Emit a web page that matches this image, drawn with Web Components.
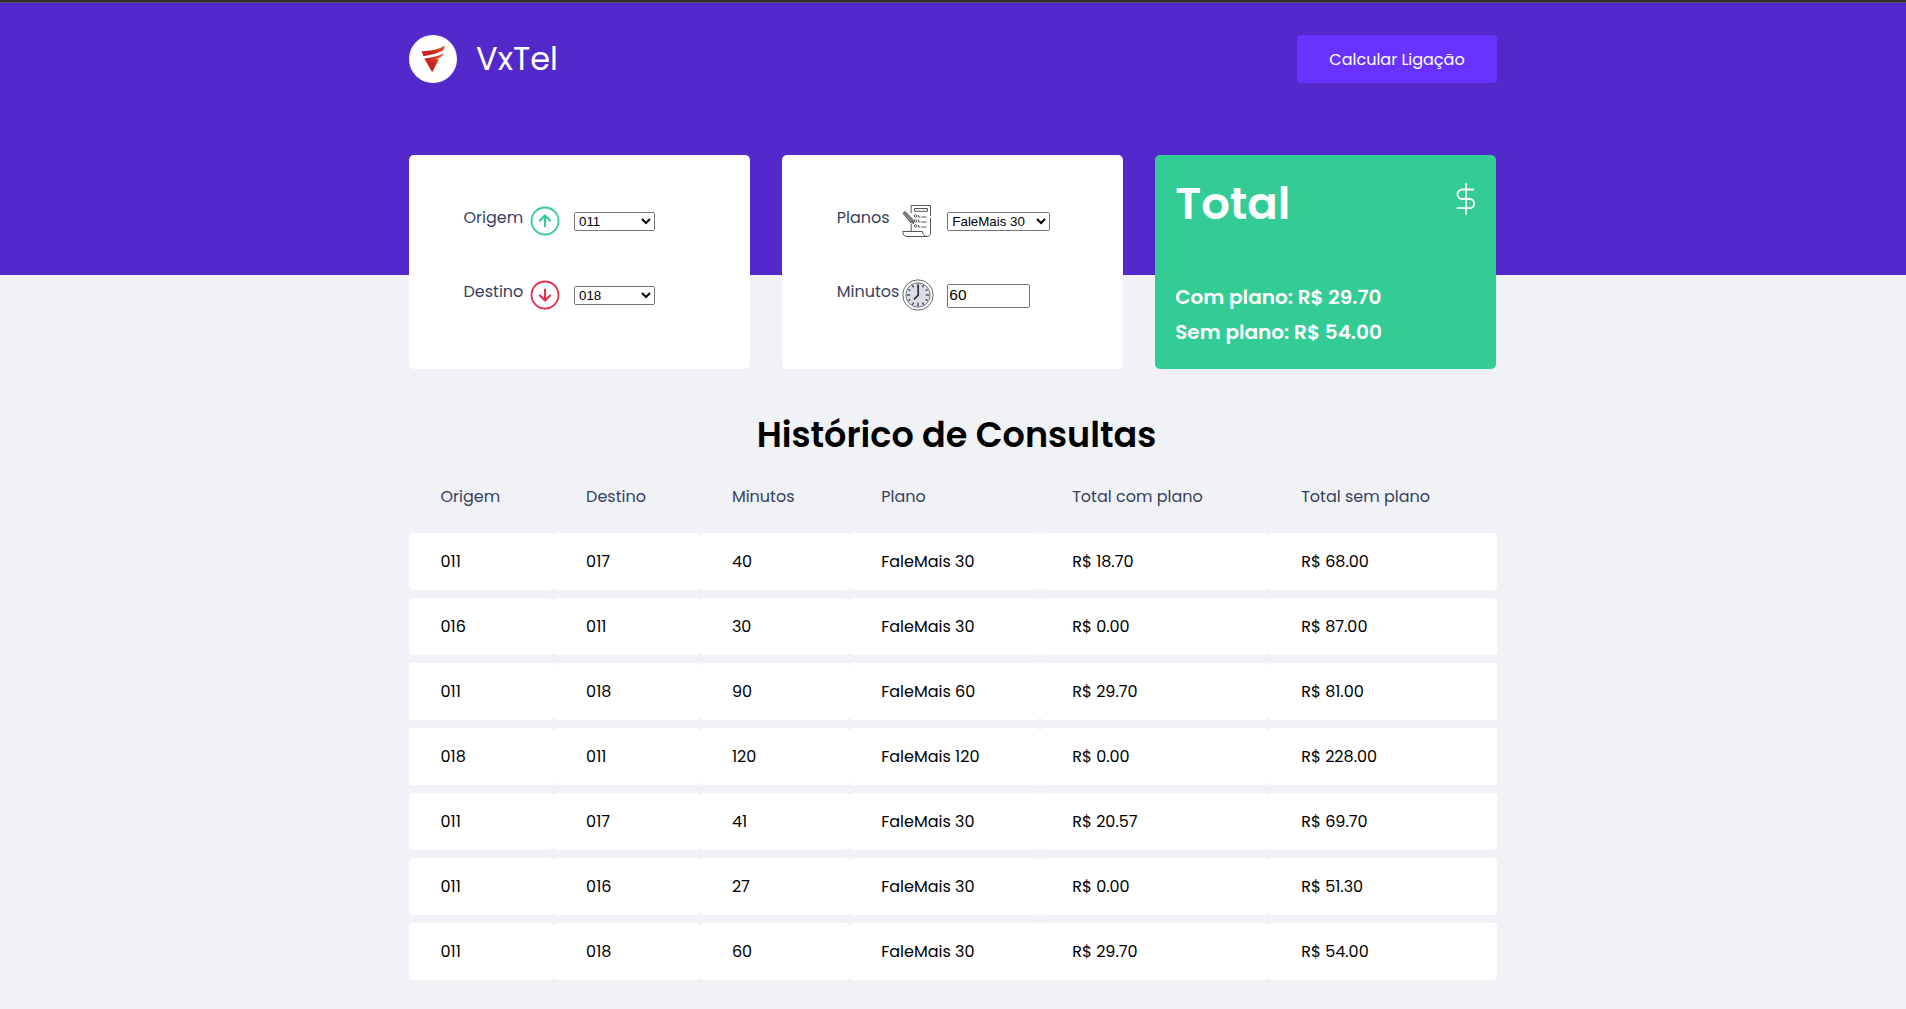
<!DOCTYPE html>
<html lang="pt-BR">
<head>
<meta charset="utf-8">
<title>VxTel</title>
<style>
html,body{margin:0;padding:0;background:#f0f2f5}
body{font-family:Poppins,Inter,"Open Sans",sans-serif;font-size:16px;color:#000;height:1009px;overflow:hidden}
</style>
</head>
<body>
<vx-app></vx-app>
<script>
const define=(name,html)=>customElements.define(name,class extends HTMLElement{
  connectedCallback(){
    if(this.shadowRoot)return;
    const t=document.createElement('template');
    t.innerHTML=typeof html==='function'?html(this):html;
    this.attachShadow({mode:'open'}).append(t.content.cloneNode(true));
  }
});

const icons={
 logo:`<svg width="48" height="48" viewBox="0 0 48 48"><defs><linearGradient id="g" x1="0" y1="1" x2="1" y2="0"><stop offset=".35" stop-color="#c8201f"/><stop offset="1" stop-color="#ea5a2c"/></linearGradient></defs><circle cx="24" cy="24" r="24" fill="#fff"/><path fill="url(#g)" d="M12.600 16.200C21 16.400 29.500 14.600 35.800 10.600C35.600 13 34.600 14.900 33 16C27.500 18.800 20.500 19.900 14.500 21.300Z"/><path fill="url(#g)" d="M15.300 23.400C22 22.600 28.500 21.300 34.600 18.400C33.800 20.600 32 22 29.800 23L26.500 24.200L30 24.300L23.200 37.300Z"/></svg>`,
 up:`<svg width="32" height="32" viewBox="0 0 32 32" fill="none" stroke="#33cc95" stroke-width="1.8" stroke-linecap="round" stroke-linejoin="round"><circle cx="16" cy="16" r="13.500"/><path stroke-width="2.100" d="M16 21.300V10.500M10.900 15.500L16 10.400L21.100 15.500"/></svg>`,
 down:`<svg width="32" height="32" viewBox="0 0 32 32" fill="none" stroke="#e52e4d" stroke-width="1.8" stroke-linecap="round" stroke-linejoin="round"><circle cx="16" cy="16" r="13.500"/><path stroke-width="2.100" d="M16 10.500V21.300M10.900 16.500L16 21.600L21.100 16.500"/></svg>`,
 plan:`<svg width="32" height="32" viewBox="0 0 32 32" fill="none" stroke="#55585c" stroke-width="1"><path d="M9.200 8V.500H28.500V11M28.500 13V28C28.500 33 20.500 32.500 20.500 26.500H.800C.800 30 2.500 31.500 5 31.500H25M9.200 19V26.500"/><path d="M12.500 3.500H25.500V6.300H12.500Z"/><circle cx="13.500" cy="11" r="1.300"/><circle cx="13.500" cy="16" r="1.300"/><circle cx="13.500" cy="21" r="1.300"/><path d="M16.500 10V12H18.500M19.500 12H24.500M16.500 15V17H18.500M19.500 17H24.500M16.500 20V22H18.500M19.500 22H24.500"/><path d="M1 8.200L3.200 6.500L10.800 14.500L11.700 18.500L8 17Z" fill="#9a9c9f"/><path d="M2.200 7.300L11 17"/></svg>`,
 clock:`<svg width="32" height="32" viewBox="0 0 32 32"><circle cx="16" cy="16" r="15.200" fill="#fff" stroke="#55585c" stroke-width=".9"/><circle cx="16" cy="16" r="12.200" fill="#d8dfe9" stroke="#55585c" stroke-width=".8"/><g stroke="#2d2f33" stroke-width="1.200">${[...Array(12)].map((_,i)=>`<path d="M16 4.800V${i%3?7.2:8.2}" transform="rotate(${i*30} 16 16)"/>`).join('')}</g><path d="M16.200 6.500V16.200L12 20.400" fill="none" stroke="#303236" stroke-width="1.700"/></svg>`,
 dollar:`<svg width="20" height="32" viewBox="0 0 20 32" fill="none" stroke="#fff" stroke-width="1.800" stroke-linecap="round" stroke-linejoin="round"><path d="M10 1V31M17.500 6.500H6.200A4.700 4.700 0 0 0 6.200 16H13.600A4.600 4.600 0 0 1 13.600 25.200H1.500"/></svg>`
};
define('vx-icon',el=>`<style>:host{display:block;line-height:0}svg{display:block}</style>${icons[el.getAttribute('name')]}`);

define('vx-button',`<style>:host{display:block}button{font:inherit;font-size:16px;line-height:24px;width:200px;height:48px;padding:2px 0 0 1px;border:0;border-radius:4px;background:#6933ff;color:#fff}</style><button><slot></slot></button>`);

define('vx-header',`<style>
:host{display:block;box-sizing:border-box;height:275px;background:#5429cc;border-top:2px solid #2e2e2e}
.line{height:1px;background:#575263}
.in{width:1088px;margin:0 auto;padding:32px 1px 0 0;display:flex;justify-content:space-between;align-items:center}
.brand{display:flex;align-items:center;gap:19.500px}
h1{margin:0;font-size:32px;line-height:48px;font-weight:400;color:#fff}
</style><div class="line"></div><div class="in"><div class="brand"><vx-icon name="logo"></vx-icon><h1>VxTel</h1></div><vx-button>Calcular Ligação</vx-button></div>`);

define('vx-field',el=>`<style>
:host{display:grid;grid-template-columns:65px 45.500px auto;align-items:center;height:32px;color:#363f5f}
label{padding-bottom:7px;line-height:24px;white-space:nowrap}
::slotted(select),::slotted(input){box-sizing:border-box;justify-self:start;margin:0}
</style><label>${el.getAttribute('label')}</label><vx-icon name="${el.getAttribute('icon')}"></vx-icon><slot></slot>`);

define('vx-card',`<style>:host{display:block;box-sizing:border-box;background:#fff;border-radius:5px;height:214px;padding:50px 0 0 55px}
.c{display:flex;flex-direction:column;gap:42px}</style><div class="c"><slot></slot></div>`);

define('vx-total',`<style>:host{display:flex;flex-direction:column;box-sizing:border-box;background:#33cc95;border-radius:5px;height:214px;padding:17px 20px 19px 20px;color:#fff;font-weight:600}
.top{display:flex;justify-content:space-between}
.t{font-size:45px;line-height:64px}
.top vx-icon{margin-top:11px}
.v{margin-top:auto;font-size:20px;line-height:35px}
</style><div class="top"><div class="t">Total</div><vx-icon name="dollar"></vx-icon></div>
<div class="v"><div>Com plano: R$ 29.70</div><div>Sem plano: R$ 54.00</div></div>`);

define('vx-summary',`<style>
:host{display:grid;grid-template-columns:repeat(3,341px);justify-content:space-between;width:1087.700px;margin:-120px auto 0;padding-right:1.300px}
select{font:13.333px "Liberation Sans",Arial,sans-serif;height:19px;color:#000}
input{font:15.500px "Liberation Sans",Arial,sans-serif;width:83px;height:24px;padding:1px 2px 3px 0;color:#000}
.a{width:81px}.b{width:103px}
.n{position:relative;top:1px}
</style>
<vx-card><vx-field label="Origem" icon="up"><select class="a"><option>011</option></select></vx-field>
<vx-field label="Destino" icon="down"><select class="a"><option>018</option></select></vx-field></vx-card>
<vx-card><vx-field label="Planos" icon="plan"><select class="b"><option>FaleMais 30</option></select></vx-field>
<vx-field label="Minutos" icon="clock"><input class="n" type="number" value="60"></vx-field></vx-card>
<vx-total></vx-total>`);

const heads=['Origem','Destino','Minutos','Plano','Total com plano','Total sem plano'];
const rows=[
 ['011','017','40','FaleMais 30','R$ 18.70','R$ 68.00'],
 ['016','011','30','FaleMais 30','R$ 0.00','R$ 87.00'],
 ['011','018','90','FaleMais 60','R$ 29.70','R$ 81.00'],
 ['018','011','120','FaleMais 120','R$ 0.00','R$ 228.00'],
 ['011','017','41','FaleMais 30','R$ 20.57','R$ 69.70'],
 ['011','016','27','FaleMais 30','R$ 0.00','R$ 51.30'],
 ['011','018','60','FaleMais 30','R$ 29.70','R$ 54.00']];

define('vx-row',`<style>:host{display:grid;grid-template-columns:145.600px 145.800px 149.300px 191px 229px 1fr;height:57px}
::slotted(*){box-sizing:border-box;padding-left:32px;border-radius:4px;line-height:57px;background:var(--cell,#fff)}
</style><slot></slot>`);

define('vx-history',`<style>
:host{display:block;width:1088px;margin:0 auto;padding-right:1px}
h2{margin:41px 0 0;padding-left:8px;text-align:center;font-size:35px;line-height:50px;font-weight:600}
.rows{display:flex;flex-direction:column;gap:8px}
.head{--cell:transparent;color:#363f5f}
</style><h2>Histórico de Consultas</h2>
<div class="rows"><vx-row class="head" style="margin:8px 0 0">${heads.map(t=>`<div>${t}</div>`).join('')}</vx-row>
${rows.map(r=>`<vx-row>${r.map(t=>`<div>${t}</div>`).join('')}</vx-row>`).join('')}</div>`);

define('vx-app','<style>:host{display:block}</style><vx-header></vx-header><vx-summary></vx-summary><vx-history></vx-history>');
</script>
</body>
</html>
